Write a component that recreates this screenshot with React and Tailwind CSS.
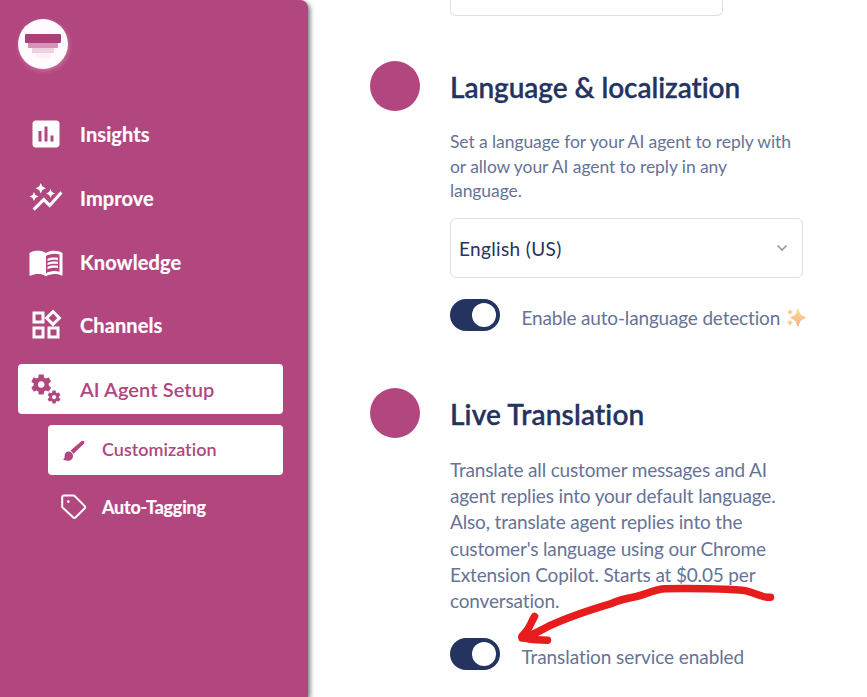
import React from "react";
import { MdAssessment, MdAutoGraph, MdMenuBook, MdOutlineWidgets } from "react-icons/md";

const GEAR =
  "M19.14 12.94c.04-.3.06-.61.06-.94 0-.32-.02-.64-.07-.94l2.03-1.58c.18-.14.23-.41.12-.61l-1.92-3.32c-.12-.22-.37-.29-.59-.22l-2.39.96c-.5-.38-1.03-.7-1.62-.94l-.36-2.54c-.04-.24-.24-.41-.48-.41h-3.84c-.24 0-.43.17-.47.41l-.36 2.54c-.59.24-1.13.57-1.62.94l-2.39-.96c-.22-.08-.47 0-.59.22L2.74 8.87c-.12.21-.08.47.12.61l2.03 1.58c-.05.3-.09.63-.09.94s.02.64.07.94l-2.03 1.58c-.18.14-.23.41-.12.61l1.92 3.32c.12.22.37.29.59.22l2.39-.96c.5.38 1.03.7 1.62.94l.36 2.54c.05.24.24.41.48.41h3.84c.24 0 .44-.17.47-.41l.36-2.54c.59-.24 1.13-.56 1.62-.94l2.39.96c.22.08.47 0 .59-.22l1.92-3.32c.12-.22.07-.47-.12-.61l-2.01-1.58zM12 15.2c-1.770 0-3.200-1.430-3.200-3.200s1.430-3.200 3.200-3.200 3.200 1.430 3.200 3.200-1.430 3.200-3.200 3.200z";

function Gears() {
  return (
    <svg width="36" height="36" viewBox="0 0 36 36" fill="currentColor">
      <path transform="translate(.6 .9) scale(1.05)" d={GEAR} />
      <path transform="translate(17.900 17.900) scale(.68)" d={GEAR} />
    </svg>
  );
}

function Brush() {
  return (
    <svg width="26" height="26" viewBox="0 0 26 26" fill="currentColor">
      <path d="M20.3 3.2c.8-.8 1.9-.7 2.6 0s.7 1.8 0 2.6L12.6 15.7l-3.1-3.1z" />
      <path d="M7.4 13.6c2.6 0 4.6 1.7 4.6 4.1 0 3.2-2.4 5.1-5.3 5.1-2.1 0-3.9-.7-4.9-1.7 1.5-.1 1.8-1.1 1.8-2.9 0-2.6 1.6-4.6 3.8-4.6z" />
    </svg>
  );
}

function Tag() {
  return (
    <svg width="26" height="26" viewBox="0 0 26 26" fill="none" stroke="currentColor" strokeWidth="2" strokeLinejoin="round">
      <path d="M1.200 3.200a1.6 1.6 0 0 1 1.6-1.6h9.6c.6 0 1.1.2 1.5.6l9.6 9.7a1.9 1.9 0 0 1 0 2.6l-8.8 8.800a1.9 1.9 0 0 1-2.6 0L1.800 13.8a2 2 0 0 1-.6-1.4z" />
      <circle cx="7.300" cy="7.600" r="1.300" fill="currentColor" stroke="none" />
    </svg>
  );
}

function NavItem({ icon, label, active }) {
  return (
    <a className={`flex h-[50px] w-[265px] items-center rounded-[4px] pl-[9.5px] text-[20px] ${active ? "bg-white font-semibold tracking-[0.1px] text-[#b2467e]" : "font-bold tracking-[0.1px] text-white [-webkit-text-stroke:0.2px_white]"}`}>
      <span className="flex w-[52.5px] items-center">{icon}</span>
      <span>{label}</span>
    </a>
  );
}

function Toggle({ label, tracking }) {
  return (
    <div className="flex h-8 items-start">
      <span className="flex h-8 w-[50px] shrink-0 items-center justify-end rounded-full bg-[#243360] pr-1">
        <span className="size-6 rounded-full bg-white" />
      </span>
      <span className={`ml-[21.5px] flex items-center pt-[6px] text-[19px] leading-[26px] whitespace-nowrap ${tracking}`}>{label}</span>
    </div>
  );
}

function Sparkles() {
  return (
    <svg className="ml-[6px]" width="20" height="20" viewBox="0 0 20 20">
      <defs>
        <linearGradient id="spark" x1="0" y1="0" x2="0" y2="1">
          <stop offset="0" stopColor="#fbdf95" />
          <stop offset="1" stopColor="#f8ad88" />
        </linearGradient>
      </defs>
      <g fill="url(#spark)">
        <path d="M12 1c.7 0 .9.5 1.2 2 .7 3 1.800 4.600 4.800 5.500 1.200.3 1.700.6 1.700 1.200s-.5.9-1.700 1.200c-3 .9-4.100 2.500-4.800 5.300-.3 1.400-.5 2-1.200 2s-.9-.6-1.200-2c-.7-2.800-1.800-4.400-4.800-5.300-1.200-.3-1.500-.6-1.500-1.200s.3-.9 1.500-1.200c3-.9 4.100-2.500 4.800-5.500.3-1.500.5-2 1.200-2z" />
        <path d="M4 .8c.7 2 1.200 2.500 3 3.200C5.200 4.700 4.700 5.200 4 7.200 3.300 5.200 2.800 4.700 1 4 2.800 3.300 3.300 2.800 4 .8z" />
        <path d="M4 11c.8 2.300 1.300 2.800 3.200 3.500-1.900.7-2.400 1.200-3.200 3.500-.8-2.300-1.300-2.800-3.200-3.500 1.900-.7 2.400-1.200 3.200-3.500z" />
      </g>
    </svg>
  );
}

function Section({ title, tracking, children }) {
  return (
    <section className="flex items-start">
      <span className="size-[50px] shrink-0 rounded-full bg-[#b2467e]" />
      <div className="ml-[30px] w-[353px]">
        <h2 className={`mt-[7px] pb-px text-[28px] leading-[38px] font-semibold whitespace-nowrap text-[#243360] [-webkit-text-stroke:0.3px_#243360] ${tracking}`}>{title}</h2>
        {children}
      </div>
    </section>
  );
}

export default function App() {
  return (
    <div className="relative flex h-[697px] w-[867px] overflow-hidden bg-white font-['Lato',sans-serif] text-[#667397] [font-variant-ligatures:none]">
      <aside className="h-full w-[308px] shrink-0 rounded-tr-[8px] bg-[#b2467e] pl-[18px] shadow-[2px_2px_5px_rgba(0,0,0,0.55)]">
        <div className="mt-[19px] flex size-[50px] flex-col items-center rounded-full bg-[#fffafd] pt-[15px] shadow-[1px_2px_5px_rgba(255,255,255,0.25)]">
          <span className="h-[9px] w-9 rounded-[1px] bg-[#ac3f78]" />
          <span className="h-[5px] w-[30px] bg-[#d693b7]" />
          <span className="h-[5px] w-[22px] bg-[#efd2e1]" />
          <span className="h-[5px] w-[15px] bg-[#fcf0f6]" />
        </div>
        <nav className="mt-10 flex flex-col gap-[13.75px]">
          <NavItem icon={<MdAssessment size={36} />} label="Insights" />
          <NavItem icon={<MdAutoGraph size={36} />} label="Improve" />
          <NavItem icon={<MdMenuBook size={36} />} label="Knowledge" />
          <NavItem icon={<MdOutlineWidgets size={36} />} label="Channels" />
          <NavItem icon={<Gears />} label="AI Agent Setup" active />
        </nav>
        <div className="mt-[11px] ml-[30px] flex w-[235px] flex-col text-[18px]">
          <a className="flex h-[50px] items-center rounded-[4px] bg-white pb-[2px] pl-[13px] font-semibold text-[#b2467e]">
            <span className="w-[41px] pt-[4px]"><Brush /></span>
            Customization
          </a>
          <a className="mt-[7px] flex h-[50px] items-center pl-[13px] font-bold tracking-[-0.2px] text-white [-webkit-text-stroke:0.2px_white]">
            <span className="w-[41px]"><Tag /></span>
            Auto-Tagging
          </a>
        </div>
      </aside>

      <main className="ml-[62px] flex flex-col">
        <div className="ml-20 h-4 w-[273px] rounded-b-[6px] border border-t-0 border-[#dedee8]" />
        <div className="mt-[45px]">
          <Section title="Language & localization" tracking="tracking-[-0.06px]">
            <p className="mt-[23px] text-[17.5px] leading-[24.5px] tracking-[-0.08px] whitespace-nowrap">
              Set a language for your AI agent to reply with<br />
              or allow your AI agent to reply in any<br />
              language.
            </p>
            <div className="mt-[14.500px] flex h-[60px] items-center justify-between rounded-[6px] border border-[#dedee8] pr-[14px] pl-2 text-[19px] text-[#243360]">
              <span className="pt-[2px] tracking-[0.35px]">English (US)</span>
              <svg width="12" height="8" viewBox="0 0 12 8" fill="none" stroke="#999" strokeWidth="1.700">
                <path d="M1.500 1.500 6 6l4.500-4.500" />
              </svg>
            </div>
            <div className="mt-[21px]">
              <Toggle tracking="tracking-[-0.17px]" label={<>Enable auto-language detection<Sparkles /></>} />
            </div>
          </Section>
        </div>
        <div className="mt-[57px]">
          <Section title="Live Translation" tracking="tracking-[0.15px]">
            <p className="mt-[23px] text-[19px] leading-[26.200px] tracking-[-0.16px] whitespace-nowrap">
              Translate all customer messages and AI<br />
              agent replies into your default language.<br />
              Also, translate agent replies into the<br />
              customer's language using our Chrome<br />
              Extension Copilot. Starts at $0.05 per<br />
              conversation.
            </p>
            <div className="mt-[24px]">
              <Toggle tracking="tracking-[-0.08px]" label="Translation service enabled" />
            </div>
          </Section>
        </div>
      </main>

      <svg className="absolute top-[570px] left-[500px]" width="290" height="90" viewBox="0 0 290 90" fill="none" stroke="#e71d1d" strokeWidth="7.500" strokeLinecap="round" strokeLinejoin="round">
        <path d="M270.500 27.300h-3.500c-7-1-14-5-22-6.700-15-2-60-2.200-81-1.800-11 1.200-22 7-31 8.500-14 2.700-15 3.500-21 6C86 41 66 48 49 56 36 63 31 66 22 68" />
        <path d="M34.500 46.500c-3 5-5 11-8 14.500l-4.700 5.500c0 2 10 3.500 25.700 3.700" />
      </svg>
    </div>
  );
}
